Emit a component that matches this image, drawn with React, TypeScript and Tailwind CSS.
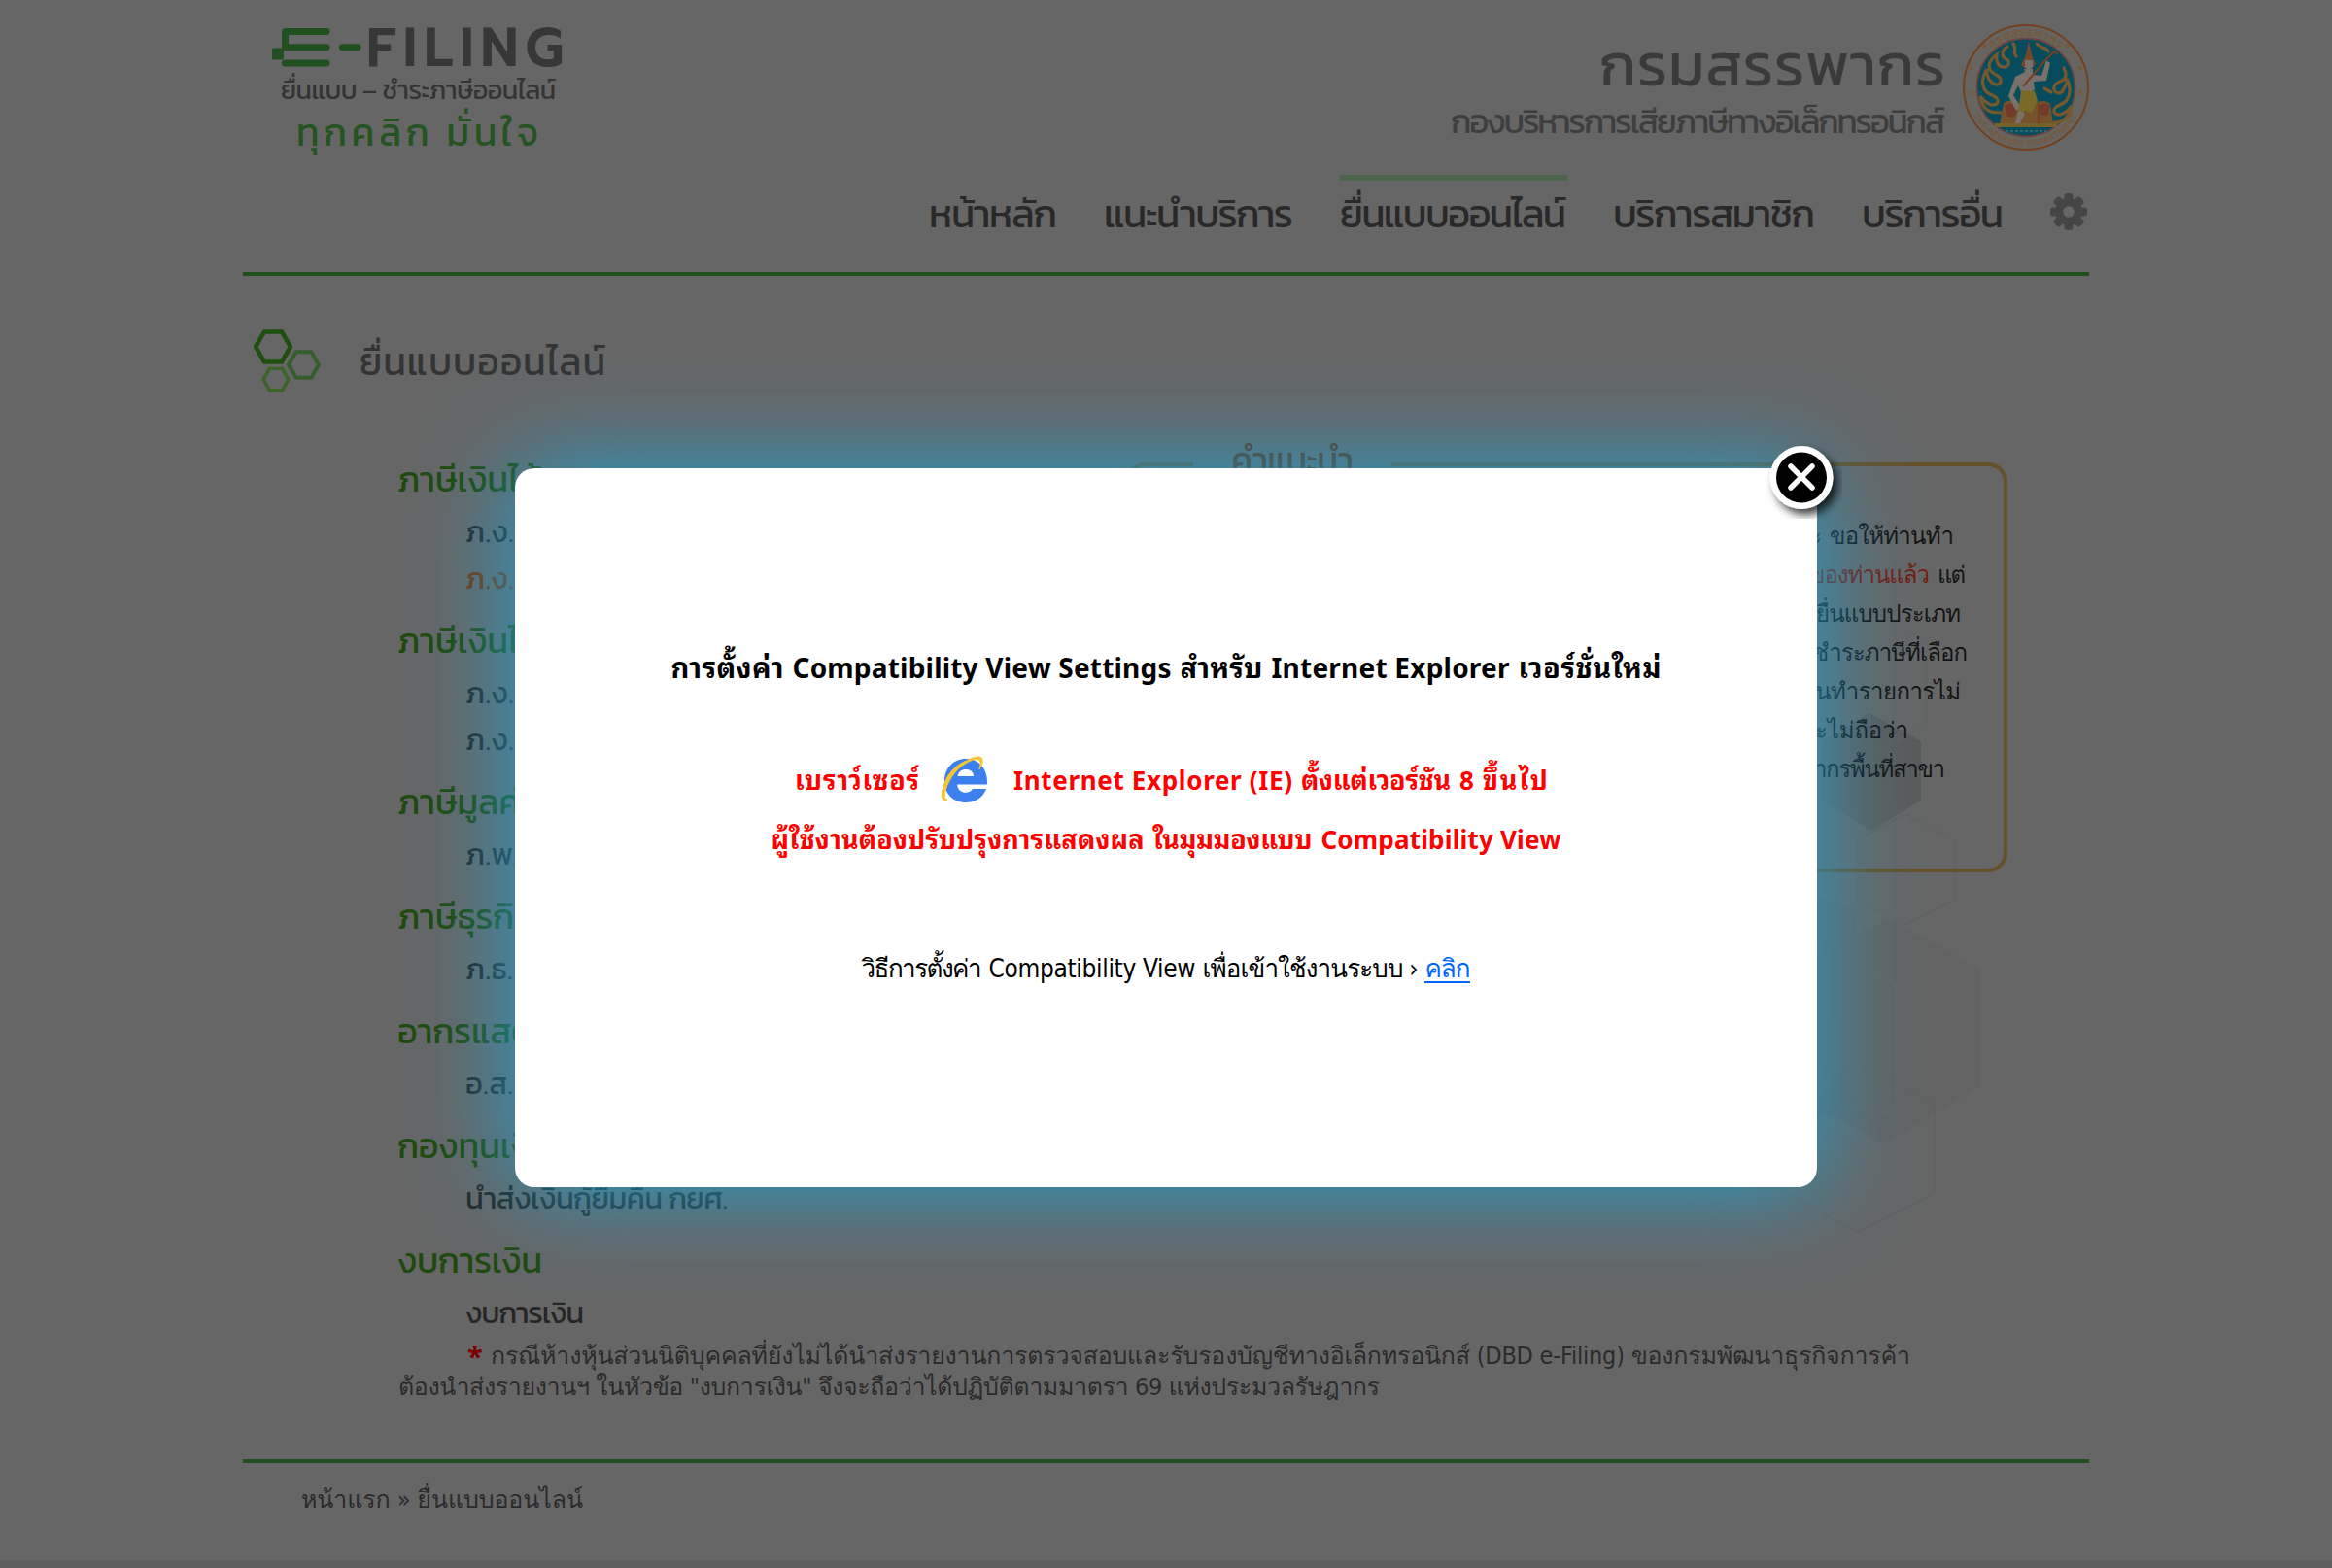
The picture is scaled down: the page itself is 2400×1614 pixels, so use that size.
import { useLayoutEffect, useRef, useState, type ReactNode } from 'react';

const LOOPLESS = "font-['Kanit','Noto_Sans_Thai','Noto_Sans',sans-serif] font-normal";
const LOOPED = "font-['DejaVu_Sans_Condensed','Loma','Noto_Sans_Thai_Looped','Noto_Sans',sans-serif]";
const LOOPED_BOLD = "font-['Noto_Sans','Noto_Sans_Thai_Looped',sans-serif] font-bold";

/** Text tracked so that it spans exactly `w` pixels. */
function Fit({ w, className = '', children }: { w: number; className?: string; children: ReactNode }) {
  const ref = useRef<HTMLSpanElement>(null);
  const [s, setS] = useState(0);
  useLayoutEffect(() => {
    const el = ref.current;
    if (!el) return;
    el.style.letterSpacing = '0px';
    const base = el.getBoundingClientRect().width;
    el.style.letterSpacing = '1px';
    const count = el.getBoundingClientRect().width - base;
    const next = count > 1.5 ? (w - base) / (count - 1) : 0;
    el.style.letterSpacing = `${next}px`;
    setS(next);
  }, [w]);
  return (
    <span ref={ref} className={`inline-block shrink-0 whitespace-nowrap ${className}`} style={{ letterSpacing: `${s}px`, marginRight: `${-s}px` }}>
      {children}
    </span>
  );
}

/** A row whose text baseline sits at the bottom of its strut. */
function Row({ className = '', gap = '', strut, children }: { className?: string; gap?: string; strut: string; children: ReactNode }) {
  return (
    <div className={`flex items-baseline whitespace-nowrap leading-none ${className}`}>
      <span className={`inline-block w-0 shrink-0 ${strut}`} />
      <div className={`flex items-baseline ${gap}`}>{children}</div>
    </div>
  );
}

function Logo() {
  return (
    <div className="ml-[30px] flex w-[320px] flex-col">
      <div className="flex h-[68px]">
        <svg className="mt-[28px] h-[42px] w-[97px]" viewBox="280 28 97 42" fill="none" stroke="#214f1f" strokeWidth="7" strokeLinecap="round">
          <path d="M293.5 32.5H336M293.5 32.5V48.800H336M293.500 65H336" strokeLinejoin="round" />
          <rect x="280" y="49.500" width="12" height="12" rx="1.500" fill="#214f1f" stroke="none" />
          <path d="M352.500 48.800H368" />
        </svg>
        <Row strut="h-[68px]" className="h-[68px] font-['Prompt','Kanit',sans-serif] text-[56px] font-semibold text-[#373737]">
          <Fit w={203}>FILING</Fit>
        </Row>
      </div>
      <Row strut="h-[34px]" className={`${LOOPLESS} ml-[9px] h-[34px] text-[27px] text-[#343434]`}>
        <Fit w={283}>ยื่นแบบ – ชำระภาษีออนไลน์</Fit>
      </Row>
      <Row strut="h-[48px]" className={`${LOOPLESS} ml-[25px] h-[48px] text-[39px] text-[#24541f]`}>
        <Fit w={249}>ทุกคลิก มั่นใจ</Fit>
      </Row>
    </div>
  );
}

function Emblem() {
  return (
    <svg className="h-[130px] w-[130px] overflow-visible" viewBox="0 0 130 130" fill="none">
      <circle cx="65" cy="65" r="64" fill="#686460" stroke="#74411f" strokeWidth="2" />
      <circle cx="65" cy="65" r="50.500" fill="#064c5c" stroke="#6b4640" strokeWidth="1.800" />
      <defs>
        <path id="arcTop" d="M12 65a53 53 0 0 1 106 0" />
        <path id="arcBottom" d="M4.500 65a60.500 60.500 0 0 0 121 0" />
      </defs>
      <g fill="#755a3c" className="font-['Noto_Sans_Thai','Noto_Sans',sans-serif] font-bold">
        <text fontSize="12.500" letterSpacing="0.500"><textPath href="#arcTop" startOffset="50%" textAnchor="middle">กรมสรรพากร</textPath></text>
        <text fontSize="8.500" letterSpacing="0.600"><textPath href="#arcBottom" startOffset="50%" textAnchor="middle">THE REVENUE DEPARTMENT</textPath></text>
        <circle cx="22" cy="22" r="2.500" /><circle cx="108" cy="22" r="2.500" />
        <circle cx="9" cy="45" r="2" /><circle cx="121" cy="45" r="2" />
        <circle cx="9" cy="71" r="2" /><circle cx="121" cy="71" r="2" />
      </g>
      <g stroke="#77582c" strokeWidth="3.200" strokeLinecap="round">
        <path d="M46 23c-7 4-6 11-1 13s2 9-4 8-7-9-6-13c-7 5-10 12-6 17s9 4 10 9-5 7-9 3-6-9-5-14c-5 8-6 16-2 22s12 5 13 10-5 6-9 4-7-5-9-8c1 8 5 14 11 16s11-1 13 3" />
        <path d="M104 45c3 6 3 11-2 13s-9 4-8 9 7 5 9 1 5-7 4-12c4 8 4 16 0 22s-12 5-13 10 5 6 9 4 7-5 9-8c-1 8-5 14-11 16s-9 1-11 3" />
        <path d="M52 20c4 4-1 9 3 13M76 20c4 5 10 3 12 8M84 66l7 4" />
      </g>
      <path d="M38 103l4-22c8-6 14 1 18 4h10c6-5 12-9 20-3l3 21z" fill="#76522c" />
      <path d="M43 84c6-5 12-2 14 3l-5 9-7-2zM77 87c3-6 9-8 13-3l-3 10-7-1z" fill="#733a2a" />
      <path d="M68 17l4 18 3 6-4 4h-8l-3-4 4-7z" fill="#75472a" />
      <path d="M64 37h8v7l-4 4-4-4z" fill="#77706b" />
      <path d="M63 46h9v6l9 1 5-16 4 3-4 18-13 1 1 9-13 4-4-9-5 10 8 12-5 4-8-15 7-20 10-5z" fill="#77706b" />
      <path d="M60 68l14 1 3 10-6 12-8-2-3 9-5-1 3-14z" fill="#796a28" />
      <path d="M58 88l6 4-7 14-4-1z" fill="#77706b" />
      <path d="M62 64l24-28 8-8 4 3M78 82v20" stroke="#74411f" strokeWidth="2" />
      <path d="M33 102h64v4H33z" fill="#76612b" />
      <path d="M44 110h42" stroke="#2f666e" strokeWidth="2.500" strokeDasharray="3 2" />
    </svg>
  );
}

function Gear() {
  return (
    <svg className="h-[38px] w-[38px]" viewBox="-19 -19 38 38">
      <g fill="#454545">
        {[0, 45, 90, 135].map((a) => (
          <rect key={a} x="-4.500" y="-19" width="9" height="38" rx="3" transform={`rotate(${a})`} />
        ))}
        <circle r="14" />
      </g>
      <circle r="5.800" fill="#666" />
    </svg>
  );
}

function Nav() {
  return (
    <nav className="mr-[2px] flex h-[100px]">
      <Row strut="h-[54px]" gap="gap-[48px]" className={`${LOOPLESS} text-[40px] text-[#292929]`}>
        <Fit w={132}>หน้าหลัก</Fit>
        <Fit w={195}>แนะนำบริการ</Fit>
        <span className="relative">
          <span className="absolute left-0 top-[-20px] h-[6px] w-[234px] bg-[#4b654b]" />
          <Fit w={233}>ยื่นแบบออนไลน์</Fit>
        </span>
        <Fit w={208}>บริการสมาชิก</Fit>
        <Fit w={146}>บริการอื่น</Fit>
      </Row>
      <div className="ml-[48px] mt-[19px]"><Gear /></div>
    </nav>
  );
}

function Header() {
  return (
    <header className="flex h-[284px] flex-col border-b-4 border-[#214f1f]">
      <div className="flex h-[180px] justify-between">
        <Logo />
        <div className="flex">
          <div className="flex flex-col items-end pr-[18px]">
            <Row strut="h-[88px]" className={`${LOOPLESS} h-[88px] text-[62px] text-[#3a3a3a]`}>
              <Fit w={356}>กรมสรรพากร</Fit>
            </Row>
            <Row strut="h-[49px]" className={`${LOOPLESS} h-[49px] text-[35px] text-[#3e3e3e]`}>
              <Fit w={509}>กองบริหารการเสียภาษีทางอิเล็กทรอนิกส์</Fit>
            </Row>
          </div>
          <div className="pt-[25px]"><Emblem /></div>
        </div>
      </div>
      <div className="flex justify-end"><Nav /></div>
    </header>
  );
}

const hex = (cx: number, cy: number, r: number) =>
  [[-1, 0], [-0.5, -0.86], [0.5, -0.86], [1, 0], [0.5, 0.86], [-0.5, 0.86]].map(([x, y]) => `${cx + x * r},${cy + y * r}`).join(' ');

function HexIcon() {
  return (
    <svg className="ml-[11px] mt-[54px] h-[66px] w-[70px]" viewBox="261.500 338 70 66" fill="none">
      <polygon points={hex(281.5, 357, 18)} stroke="#1f4f0e" strokeWidth="4.500" />
      <polygon points={hex(313, 375.5, 15.500)} stroke="#355c2b" strokeWidth="4" />
      <polygon points={hex(284.5, 390.500, 13)} stroke="#3c6429" strokeWidth="3.500" />
    </svg>
  );
}

type Item = { text: string; w?: number; hot?: boolean };
const groups: { title: string; w?: number; items: Item[] }[] = [
  { title: 'ภาษีเงินได้บุคคลธรรมดา', items: [{ text: 'ภ.ง.ด. 90/91' }, { text: 'ภ.ง.ด. 94', hot: true }] },
  { title: 'ภาษีเงินได้นิติบุคคล', items: [{ text: 'ภ.ง.ด. 50' }, { text: 'ภ.ง.ด. 51' }] },
  { title: 'ภาษีมูลค่าเพิ่ม', items: [{ text: 'ภ.พ. 30' }] },
  { title: 'ภาษีธุรกิจเฉพาะ', items: [{ text: 'ภ.ธ. 40' }] },
  { title: 'อากรแสตมป์', items: [{ text: 'อ.ส. 9' }] },
  { title: 'กองทุนเงินให้กู้ยืม', items: [{ text: 'นำส่งเงินกู้ยืมคืน กยศ.', w: 270 }] },
  { title: 'งบการเงิน', w: 149, items: [{ text: 'งบการเงิน', w: 122 }] },
];

function TaxList() {
  return (
    <div className="-ml-px flex w-[749px] flex-col gap-1">
      {groups.map((g) => (
        <section key={g.title}>
          <Row strut="h-[52px]" className={`${LOOPLESS} h-[66px] text-[36px] text-[#1f4a0d]`}>
            {g.w ? <Fit w={g.w}>{g.title}</Fit> : <span className="tracking-[-0.2px]">{g.title}</span>}
          </Row>
          {g.items.map((it) => (
            <Row key={it.text} strut="h-[38px]" className={`${LOOPLESS} ml-[70px] h-[48px] text-[31px] ${it.hot ? 'text-[#73330c]' : 'text-[#262626]'}`}>
              {it.w ? <Fit w={it.w}>{it.text}</Fit> : <span className="tracking-[0.4px]">{it.text}</span>}
            </Row>
          ))}
        </section>
      ))}
    </div>
  );
}

function Advice() {
  return (
    <aside className={`${LOOPED} relative mt-[22px] flex h-[422px] w-[908px] flex-col rounded-[20px] border-4 border-[#66512d] pt-[40px] text-[24px] text-[#131313]`}>
      <div className={`${LOOPLESS} absolute -top-[46px] left-[66px] w-[204px] bg-[#666] pl-[39px] text-[36px] text-[#5f2c0c]`}>
        <Row strut="h-[52px]" className="h-[60px]"><Fit w={126}>คำแนะนำ</Fit></Row>
      </div>
      <Row strut="h-[40px]" gap="gap-[8px]" className="h-[40px] justify-end pr-[51px]"><span>นะคะ</span><Fit w={128}>ขอให้ท่านทำ</Fit></Row>
      <Row strut="h-[40px]" gap="gap-[8px]" className="h-[40px] justify-end pr-[39px]"><Fit w={124} className="text-[#741b10]">ของท่านแล้ว</Fit><Fit w={29}>แต่</Fit></Row>
      <Row strut="h-[40px]" className="h-[40px] justify-end pr-[44px]"><Fit w={149}>ยื่นแบบประเภท</Fit></Row>
      <Row strut="h-[40px]" className="h-[40px] justify-end pr-[37px]"><Fit w={159}>ชำระภาษีที่เลือก</Fit></Row>
      <Row strut="h-[40px]" className="h-[40px] justify-end pr-[44px]"><Fit w={178}>ท่านทำรายการไม่</Fit></Row>
      <Row strut="h-[40px]" className="h-[40px] justify-end pr-[98px]"><Fit w={110}>จะไม่ถือว่า</Fit></Row>
      <Row strut="h-[40px]" className="h-[40px] justify-end pr-[60px]"><Fit w={186}>สรรพากรพื้นที่สาขา</Fit></Row>
    </aside>
  );
}

function HexBackdrop() {
  return (
    <svg className="absolute left-[1500px] top-[600px] h-[700px] w-[400px]" viewBox="1750 600 400 700" fill="none">
      <defs>
        <linearGradient id="hexFade" x1="0" y1="0.500" x2="1" y2="0.300">
          <stop offset="0" stopColor="#616161" />
          <stop offset="1" stopColor="#595959" />
        </linearGradient>
      </defs>
      <polygon points="1924,734 1977,763 1977,824 1926,855 1874,824 1874,763" fill="url(#hexFade)" />
      <polygon points="1943,946 2038,998 2038,1118 1937,1178 1836,1118 1836,998" fill="#636363" />
      <g stroke="#606060" strokeWidth="1">
        <polygon points="1918,625 1983,660 1983,745 1918,782 1850,745 1850,660" stroke="#636363" />
        <polygon points="1961,838 2012,865 2012,926 1961,951 1911,926 1911,865" />
        <polygon points="1913,1094 1991,1136 1991,1228 1913,1268 1836,1228 1836,1136" />
        <path d="M1870 955l18 9v83l-18 8" />
      </g>
      <path d="M1870 970l81 43v127l-45 22" stroke="#696969" />
      <path d="M1870 925l18 2 22 12v30l-22 12-18-10z" fill="#636363" />
      <path d="M1870 1098l30 10v28l-14 14h-16z" fill="#626262" />
    </svg>
  );
}

function IeIcon() {
  return (
    <svg className="h-[50px] w-[50px]" viewBox="0 0 50 50" fill="none">
      <path d="M27 3C14 3 5 13 5 26s9 22 22 22c10 0 18-5.500 21-14H34c-1.500 2.600-4 3.800-7 3.800-5 0-8.500-3-8.800-8.300H49C50 14 41 3 27 3zM18.500 21c.8-4.500 4-7 8.500-7s7.700 2.500 8.200 7z" fill="#3b80ee" />
      <path d="M30 4C16 9 6 20 3 35c-2 8 0 12 5 10-3 0-3.500-3-2-9C10 22 20 10 32 5c7-3 11-1 10 4l-1 5c5-8 4-13-1-13-3 0-7 1-10 3z" fill="#f6c437" stroke="#f6c437" strokeWidth="1" />
    </svg>
  );
}

function CloseButton() {
  return (
    <svg className="absolute -right-[26px] -top-[32px] h-[84px] w-[84px]" viewBox="0 0 84 84" fill="none">
      <defs>
        <filter id="drop" x="-30%" y="-30%" width="170%" height="170%">
          <feDropShadow dx="5" dy="6" stdDeviation="5" floodColor="#000" floodOpacity="0.750" />
        </filter>
      </defs>
      <circle cx="42" cy="41.500" r="32.500" fill="#fff" filter="url(#drop)" />
      <circle cx="42" cy="41.500" r="26" fill="#000" />
      <path d="M31 30l22 22M53 30L31 52" stroke="#fff" strokeWidth="5.500" strokeLinecap="round" />
    </svg>
  );
}

function Modal() {
  return (
    <div className="absolute left-[530px] top-[482px] flex h-[740px] w-[1340px] flex-col items-center rounded-[20px] bg-white text-black shadow-[0_0_100px_#24a0ce]">
      <Row strut="h-[216px]" gap="gap-[9px]" className={`${LOOPED_BOLD} h-[216px] text-[28px]`}>
        <Fit w={116} className="text-[29px]">การตั้งค่า</Fit>
        <Fit w={390}>Compatibility View Settings</Fit>
        <Fit w={85} className="text-[29px]">สำหรับ</Fit>
        <Fit w={245}>Internet Explorer</Fit>
        <Fit w={147} className="text-[29px]">เวอร์ชั่นใหม่</Fit>
      </Row>
      <Row strut="h-[115px]" className={`${LOOPED_BOLD} ml-[11px] h-[115px] text-[26px] text-[#ff0000]`}>
        <Fit w={128} className="text-[27px]">เบราว์เซอร์</Fit>
        <span className="ml-[21px] mr-[26px] h-[50px] w-[50px] -translate-y-[11px] self-end"><IeIcon /></span>
        <div className="flex items-baseline gap-[9px]">
          <Fit w={287}>Internet Explorer (IE)</Fit>
          <Fit w={154} className="text-[27px]">ตั้งแต่เวอร์ชัน</Fit>
          <span>8</span>
          <Fit w={67} className="text-[27px]">ขึ้นไป</Fit>
        </div>
      </Row>
      <Row strut="h-[61px]" gap="gap-[9px]" className={`${LOOPED_BOLD} h-[61px] text-[26px] text-[#ff0000]`}>
        <Fit w={384} className="text-[27px]">ผู้ใช้งานต้องปรับปรุงการแสดงผล</Fit>
        <Fit w={164} className="text-[27px]">ในมุมมองแบบ</Fit>
        <Fit w={247}>Compatibility View</Fit>
      </Row>
      <Row strut="h-[132px]" gap="gap-[7px]" className={`${LOOPED} h-[132px] text-[26px]`}>
        <Fit w={124}>วิธีการตั้งค่า</Fit>
        <Fit w={213}>Compatibility View</Fit>
        <Fit w={222}>เพื่อเข้าใช้งานระบบ ›</Fit>
        <a className="border-b-2 border-[#0066ff] text-[#0066ff]"><Fit w={47}>คลิก</Fit></a>
      </Row>
      <CloseButton />
    </div>
  );
}

export default function App() {
  return (
    <div className="relative flex h-[1614px] w-[2400px] flex-col overflow-hidden bg-[#666]">
      <div className="relative mx-auto flex w-[1900px] grow flex-col">
        <HexBackdrop />
        <Header />
        <div className="flex h-[170px]">
          <HexIcon />
          <Row strut="h-[102px]" className={`${LOOPLESS} ml-[39px] text-[39px] text-[#343434]`}>
            <Fit w={253}>ยื่นแบบออนไลน์</Fit>
          </Row>
        </div>
        <main className="relative ml-[160px] flex h-[918px]">
          <TaxList />
          <Advice />
        </main>
        <div className={`${LOOPED} ml-[160px] flex flex-col text-[25px] text-[#2b2b2b]`}>
          <Row strut="h-[32px]" gap="gap-[9px]" className="ml-[71px] h-[32px]">
            <span className="w-[15px] translate-y-[3px] font-['Noto_Sans',sans-serif] text-[29px] font-bold text-[#7b0000]">*</span>
            <Fit w={1461}>กรณีห้างหุ้นส่วนนิติบุคคลที่ยังไม่ได้นำส่งรายงานการตรวจสอบและรับรองบัญชีทางอิเล็กทรอนิกส์ (DBD e-Filing) ของกรมพัฒนาธุรกิจการค้า</Fit>
          </Row>
          <Row strut="h-[32px]" className="h-[32px]">
            <Fit w={1010}>ต้องนำส่งรายงานฯ ในหัวข้อ "งบการเงิน" จึงจะถือว่าได้ปฏิบัติตามมาตรา 69 แห่งประมวลรัษฎากร</Fit>
          </Row>
        </div>
        <footer className={`${LOOPED} mt-[66px] border-t-4 border-[#214f1f] pl-[60px] text-[25px] text-[#2b2b2b]`}>
          <Row strut="h-[46px]"><Fit w={290}>หน้าแรก » ยื่นแบบออนไลน์</Fit></Row>
        </footer>
      </div>
      <div className="h-2 bg-[#5f5f5f]" />
      <Modal />
    </div>
  );
}
